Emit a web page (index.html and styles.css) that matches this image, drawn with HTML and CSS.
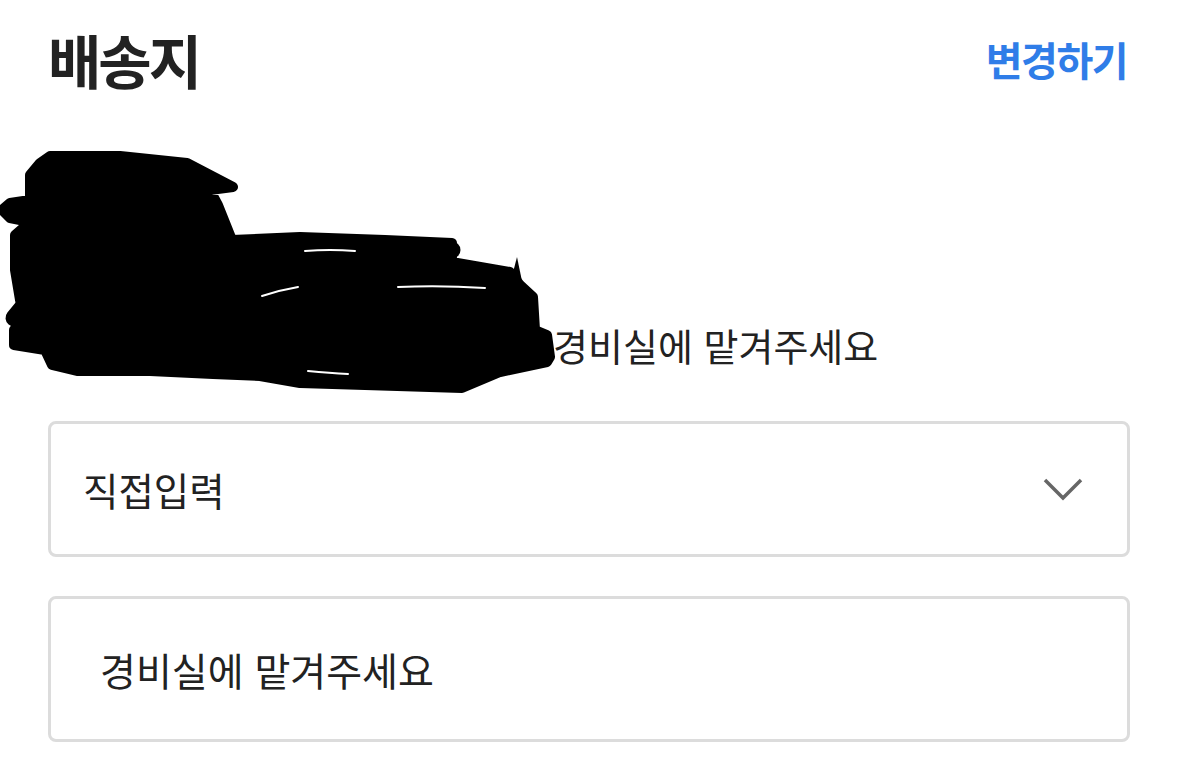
FILE: index.html
```html
<!DOCTYPE html>
<html lang="ko">
<head>
  <meta charset="UTF-8">
  <title>배송지</title>
  <link rel="stylesheet" href="styles.css">
</head>
<body>

  <div class="page">

    <div class="header">
      <h1 class="title">배송지</h1>
      <a class="change-link" href="#">변경하기</a>
    </div>

    <div class="address">
      <svg class="scribble" width="560" height="250" viewBox="0 150 560 250">
        <path class="blot" d="M50 156 L120 156 L187 163 L233 187 L210 190 L218 205 L232 240 L300 237 L385 240 L452 243 L452 257 L440 260 L510 272 L520 285 L533 297 L535 330 L547 335 L550 357 L547 362 L500 372 L462 388 L300 383 L260 376 L213 374 L150 371 L77 371 L52 365 L45 350 L14 345 L14 330 L25 318 L20 300 L15 270 L15 235 L30 222 L10 218 L2 210 L10 203 L30 200 L30 175 L40 163 Z"/>
        <line class="pen" x1="10" y1="210" x2="70" y2="218"/>
        <line class="pen" x1="14" y1="318" x2="32" y2="296"/>
        <line class="pen" x1="22" y1="340" x2="120" y2="340"/>
        <line class="pen" x1="380" y1="250" x2="452" y2="250"/>
        <line class="pen" x1="470" y1="372" x2="540" y2="350"/>
        <line class="pen" x1="60" y1="358" x2="200" y2="362"/>
        <line class="pen" x1="305" y1="376" x2="455" y2="380"/>
        <line class="pen" x1="50" y1="165" x2="180" y2="168"/>
        <polygon class="ink" points="180,160 233,187 205,191"/>
        <polygon class="ink" points="510,284 517,257 523,286"/>
        <path class="gap" d="M305 251 Q330 249 355 251"/>
        <path class="gap" d="M398 287 Q440 285 485 288"/>
        <path class="gap" d="M262 296 Q280 290 298 287"/>
        <path class="gap" d="M308 371 Q330 373 348 374"/>
      </svg>
      <p class="address-line"><span class="masked"></span>경비실에 맡겨주세요</p>
    </div>

    <div class="select-box">
      <span>직접입력</span>
      <svg class="chevron" width="40" height="24" viewBox="0 0 40 24">
        <polyline points="2,3 20,21 38,3"/>
      </svg>
    </div>

    <input class="memo-input" type="text" value="경비실에 맡겨주세요">

  </div>

</body>
</html>
```

FILE: styles.css
```css
body {
  margin: 0;
  background-color: #fff;
  font-family: "Noto Sans CJK KR", "Noto Sans", sans-serif;
  color: #222;
}

.page {
  padding: 0 49px 0 48px;
}

.header {
  display: flex;
  justify-content: space-between;
  align-items: center;
  padding-top: 21px;
}

.title {
  margin: 0;
  font-size: 58px;
  font-weight: 700;
  line-height: 76px;
  letter-spacing: -3px;
}

.change-link {
  margin-right: 3px;
  color: #2f7de8;
  font-size: 40px;
  font-weight: 700;
  letter-spacing: -1.5px;
  text-decoration: none;
}

.address {
  position: relative;
  padding-top: 223px;
}

.scribble {
  position: absolute;
  left: -48px;
  top: 53px;
}

.blot {
  fill: #000;
  stroke: #000;
  stroke-width: 10;
  stroke-linejoin: round;
}

.pen {
  stroke: #000;
  stroke-width: 17;
  stroke-linecap: round;
}

.ink {
  fill: #000;
}

.gap {
  fill: none;
  stroke: #fff;
  stroke-width: 2;
  stroke-linecap: round;
}

.address-line {
  margin: 0;
  font-size: 38px;
  line-height: 50px;
}

.masked {
  display: inline-block;
  width: 505px;
}

.select-box {
  display: flex;
  justify-content: space-between;
  align-items: center;
  height: 130px;
  margin-top: 51px;
  padding: 0 44px 0 32px;
  border: 3px solid #dcdcdc;
  border-radius: 8px;
  font-size: 38.5px;
}

.chevron polyline {
  fill: none;
  stroke: #666;
  stroke-width: 3.5;
}

.memo-input {
  display: block;
  box-sizing: border-box;
  width: 100%;
  height: 146px;
  margin-top: 39px;
  padding: 0 0 0 49px;
  border: 3px solid #dcdcdc;
  border-radius: 8px;
  font-family: inherit;
  font-size: 39px;
  color: #222;
  outline: none;
}
```
